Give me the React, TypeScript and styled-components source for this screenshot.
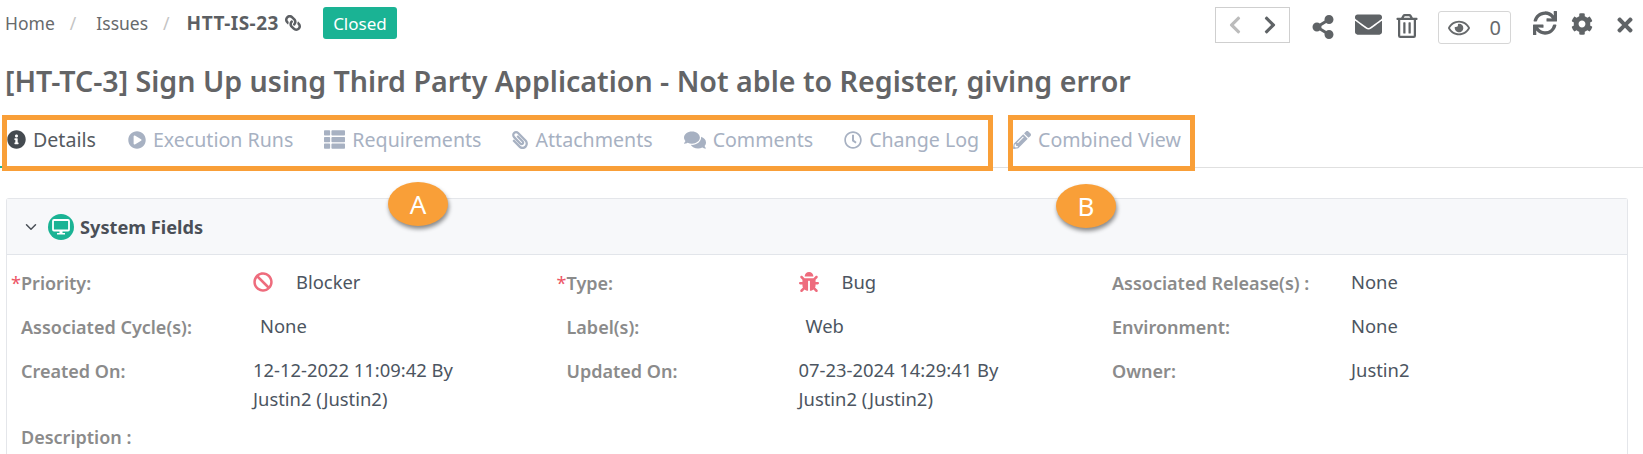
import React from 'react';
import styled, { createGlobalStyle } from 'styled-components';
import { ChevronDown } from 'lucide-react';
import {
  FaBan,
  FaBug,
  FaChevronLeft,
  FaChevronRight,
  FaCog,
  FaComments,
  FaEnvelope,
  FaInfoCircle,
  FaLink,
  FaPaperclip,
  FaPencilAlt,
  FaPlayCircle,
  FaRegClock,
  FaRegEye,
  FaRegTrashAlt,
  FaShareAlt,
  FaSync,
  FaThList,
  FaTimes,
} from 'react-icons/fa';

const GlobalStyle = createGlobalStyle`
  html, body {
    margin: 0;
    background: #fff;
  }
  body {
    font-family: 'Noto Sans', 'Open Sans', sans-serif;
    overflow: hidden;
  }
`;

const Page = styled.div`
  width: 1643px;
  height: 454px;
  overflow: hidden;
`;

const TopBar = styled.div`
  display: flex;
  justify-content: space-between;
  align-items: flex-start;
  height: 46px;
  padding-top: 7px;
  box-sizing: border-box;
`;

const Breadcrumb = styled.div`
  display: flex;
  align-items: center;
  height: 32px;
  padding-left: 5px;
  font-size: 17.5px;
  color: #676a6c;
`;

const Separator = styled.span<{ $after: number }>`
  color: #c4c4c4;
  margin: 0 ${props => props.$after}px 0 15px;
`;

const Current = styled.span`
  display: flex;
  align-items: center;
  gap: 6px;
  font-size: 19px;
  letter-spacing: 0.5px;
  font-weight: 700;
  color: #5c5f63;
`;

const FlippedLink = styled(FaLink)`
  transform: scaleX(-1);
`;

const StatusBadge = styled.span`
  display: flex;
  align-items: center;
  justify-content: center;
  width: 74px;
  height: 32px;
  margin-left: 22px;
  border-radius: 3px;
  background: #1ab394;
  color: #fff;
  font-size: 17px;
`;

const Actions = styled.div`
  display: flex;
  align-items: flex-start;
  padding-right: 7px;
  color: #5f6366;
`;

const Pager = styled.div`
  display: flex;
  align-items: center;
  justify-content: space-between;
  width: 75px;
  height: 36px;
  box-sizing: border-box;
  padding: 0 9px;
  border: 1px solid #cfcfcf;
  font-size: 20px;
`;

const ActionIcon = styled.span<{ $left: number; $top: number; $size: number }>`
  display: flex;
  margin-left: ${props => props.$left}px;
  margin-top: ${props => props.$top}px;
  font-size: ${props => props.$size}px;
`;

const WatchBox = styled.div`
  display: flex;
  align-items: center;
  justify-content: space-between;
  width: 73px;
  height: 33px;
  margin: 4px 0 0 19px;
  padding: 0 9px;
  box-sizing: border-box;
  border: 1px solid #d6d6d6;
  border-radius: 3px;
  font-size: 20px;
  color: #676a6c;
`;

const Title = styled.h1`
  margin: 0;
  height: 69px;
  padding: 16px 0 0 5px;
  box-sizing: border-box;
  font-size: 28.6px;
  line-height: 38px;
  font-weight: 600;
  color: #636466;
  white-space: nowrap;
`;

const TabBar = styled.div`
  position: relative;
  display: flex;
  align-items: flex-start;
  height: 52px;
  border-bottom: 1px solid #e0e0e0;

  &::before {
    content: '';
    position: absolute;
    left: 0;
    bottom: -1px;
    width: 2px;
    height: 2px;
    background: #1ab394;
  }
`;

const TabGroup = styled.div<{ $width: number; $left: number }>`
  position: relative;
  display: flex;
  align-items: center;
  width: ${props => props.$width}px;
  height: 56px;
  margin-left: ${props => props.$left}px;
  padding-bottom: 7px;
  box-sizing: border-box;
  border: 5px solid #f99f38;
`;

const Tab = styled.div<{ $active?: boolean; $left: number }>`
  display: flex;
  align-items: center;
  gap: 7px;
  margin-left: ${props => props.$left}px;
  font-size: 19.6px;
  color: ${props => (props.$active ? '#555a5f' : '#a7b1c2')};
  white-space: nowrap;
`;

const TabIcon = styled.span<{ $active?: boolean; $size?: number; $flip?: boolean }>`
  display: flex;
  font-size: ${props => props.$size ?? 18}px;
  color: ${props => (props.$active ? '#444a50' : '#a7b1c2')};
  transform: ${props => (props.$flip ? 'scaleX(-1)' : 'none')};
`;

const Marker = styled.div<{ $left: number; $top: number }>`
  position: absolute;
  left: ${props => props.$left}px;
  top: ${props => props.$top}px;
  display: flex;
  align-items: center;
  justify-content: center;
  width: 60px;
  height: 44px;
  border-radius: 50%;
  background: #f99f38;
  box-shadow: 1px 3px 4px rgba(0, 0, 0, 0.45);
  color: #fff;
  font-size: 26px;
  z-index: 2;
`;

const Card = styled.section`
  margin: 30px 15px 0 6px;
  border: 1px solid #e4e6ea;
  border-radius: 3px 3px 0 0;
  border-bottom: none;
  height: 260px;
`;

const CardHeader = styled.div`
  display: flex;
  align-items: center;
  height: 56px;
  padding-left: 15px;
  box-sizing: border-box;
  background: #f7f8fa;
  border-bottom: 1px solid #e2e5ea;
  color: #4a4f57;
  font-size: 18.2px;
  font-weight: 700;
`;

const MonitorBadge = styled.span`
  display: flex;
  align-items: center;
  justify-content: center;
  width: 26px;
  height: 26px;
  margin: 0 6px 0 8px;
  border-radius: 50%;
  background: #1ab394;
`;

const FieldGrid = styled.div`
  display: grid;
  grid-template-columns: repeat(3, 545.5px);
  padding: 12px 0 0 14px;
`;

const Field = styled.div<{ $valueOffset?: number }>`
  display: grid;
  grid-template-columns: ${props => props.$valueOffset ?? 232}px 1fr;
  min-height: 44px;
  line-height: 29px;
`;

const Label = styled.div`
  position: relative;
  padding-top: 2px;
  color: #8b8b8b;
  font-size: 18px;
  font-weight: 600;
  white-space: nowrap;
`;

const Required = styled.span`
  position: absolute;
  left: -10px;
  color: #ed5565;
  font-weight: 400;
`;

const Value = styled.div`
  margin: 0 0 8px;
  color: #4c5561;
  font-size: 18.4px;
`;

const PriorityIcon = styled.span`
  display: inline-flex;
  vertical-align: -3px;
  margin-right: 23px;
  color: #ee6c7d;
  font-size: 20px;
`;

const Indented = styled.span`
  padding-left: 7px;
`;

const Monitor = () => (
  <svg width="18" height="16" viewBox="0 0 18 16" aria-hidden="true">
    <rect x="1" y="1" width="16" height="10.5" rx="1" fill="#1ab394" stroke="#fff" strokeWidth="1.8" />
    <path d="M7.5 12h3v2h2.5v1.4H5V14h2.5z" fill="#fff" />
  </svg>
);

const App: React.FC = () => (
  <Page>
    <GlobalStyle />
    <TopBar>
      <Breadcrumb>
        <span>Home</span>
        <Separator $after={20}>/</Separator>
        <span>Issues</span>
        <Separator $after={17}>/</Separator>
        <Current>
          HTT-IS-23 <FlippedLink size={16} />
        </Current>
        <StatusBadge>Closed</StatusBadge>
      </Breadcrumb>
      <Actions>
        <Pager>
          <FaChevronLeft color="#bcbcbc" />
          <FaChevronRight />
        </Pager>
        <ActionIcon $left={21} $top={8} $size={24}>
          <FaShareAlt />
        </ActionIcon>
        <ActionIcon $left={20} $top={4} $size={27}>
          <FaEnvelope />
        </ActionIcon>
        <ActionIcon $left={13} $top={7} $size={24}>
          <FaRegTrashAlt />
        </ActionIcon>
        <WatchBox>
          <FaRegEye size={22} />
          <span>0</span>
        </WatchBox>
        <ActionIcon $left={22} $top={4} $size={24}>
          <FaSync />
        </ActionIcon>
        <ActionIcon $left={14} $top={6} $size={22}>
          <FaCog />
        </ActionIcon>
        <ActionIcon $left={21} $top={7} $size={22}>
          <FaTimes />
        </ActionIcon>
      </Actions>
    </TopBar>
    <Title>[HT-TC-3] Sign Up using Third Party Application - Not able to Register, giving error</Title>
    <TabBar>
      <TabGroup $width={991} $left={2}>
        <Tab $active $left={0}>
          <TabIcon $active $size={19}><FaInfoCircle /></TabIcon>
          Details
        </Tab>
        <Tab $left={32}>
          <TabIcon><FaPlayCircle /></TabIcon>
          Execution Runs
        </Tab>
        <Tab $left={31}>
          <TabIcon $size={21}><FaThList /></TabIcon>
          Requirements
        </Tab>
        <Tab $left={29}>
          <TabIcon $flip><FaPaperclip /></TabIcon>
          Attachments
        </Tab>
        <Tab $left={31}>
          <TabIcon $size={22}><FaComments /></TabIcon>
          Comments
        </Tab>
        <Tab $left={31}>
          <TabIcon><FaRegClock /></TabIcon>
          Change Log
        </Tab>
        <Marker $left={381} $top={62}>A</Marker>
      </TabGroup>
      <TabGroup $width={187} $left={15}>
        <Tab $left={0}>
          <TabIcon><FaPencilAlt /></TabIcon>
          Combined View
        </Tab>
        <Marker $left={43} $top={64}>B</Marker>
      </TabGroup>
    </TabBar>
    <Card>
      <CardHeader>
        <ChevronDown size={18} color="#4a4f57" />
        <MonitorBadge><Monitor /></MonitorBadge>
        System Fields
      </CardHeader>
      <FieldGrid>
        <Field>
          <Label><Required>*</Required>Priority:</Label>
          <Value><PriorityIcon><FaBan /></PriorityIcon>Blocker</Value>
        </Field>
        <Field>
          <Label><Required>*</Required>Type:</Label>
          <Value><PriorityIcon><FaBug /></PriorityIcon>Bug</Value>
        </Field>
        <Field $valueOffset={239}>
          <Label>Associated Release(s) :</Label>
          <Value>None</Value>
        </Field>
        <Field>
          <Label>Associated Cycle(s):</Label>
          <Value><Indented>None</Indented></Value>
        </Field>
        <Field>
          <Label>Label(s):</Label>
          <Value><Indented>Web</Indented></Value>
        </Field>
        <Field $valueOffset={239}>
          <Label>Environment:</Label>
          <Value>None</Value>
        </Field>
        <Field>
          <Label>Created On:</Label>
          <Value>12-12-2022 11:09:42 By<br />Justin2 (Justin2)</Value>
        </Field>
        <Field>
          <Label>Updated On:</Label>
          <Value>07-23-2024 14:29:41 By<br />Justin2 (Justin2)</Value>
        </Field>
        <Field $valueOffset={239}>
          <Label>Owner:</Label>
          <Value>Justin2</Value>
        </Field>
        <Field>
          <Label>Description :</Label>
        </Field>
      </FieldGrid>
    </Card>
  </Page>
);

export default App;
